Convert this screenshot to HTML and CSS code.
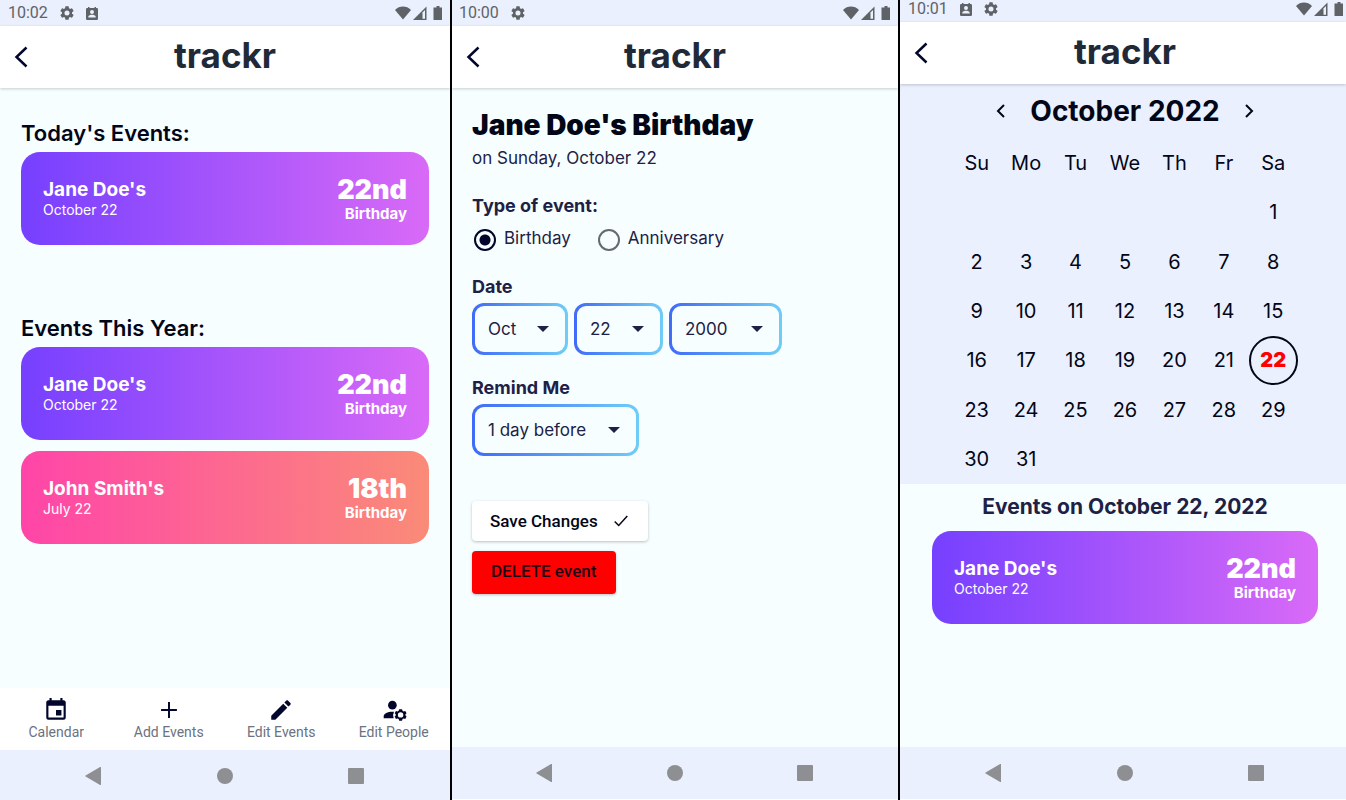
FILE: index.html
```html
<!DOCTYPE html>
<html lang="en">
<head>
<meta charset="utf-8">
<title>trackr</title>
<link rel="stylesheet" href="styles.css">
</head>
<body>
<svg class="sprite" aria-hidden="true">
  <symbol id="gear" viewBox="2 2 20 20"><path d="M19.14 12.94c.04-.3.06-.61.06-.94 0-.32-.02-.64-.07-.94l2.03-1.58a.49.49 0 0 0 .12-.61l-1.92-3.32a.49.49 0 0 0-.59-.22l-2.39.96c-.5-.38-1.03-.7-1.62-.94l-.36-2.54a.48.48 0 0 0-.48-.41h-3.84c-.24 0-.43.17-.47.41l-.36 2.54c-.59.24-1.13.57-1.62.94l-2.39-.96a.48.48 0 0 0-.59.22L2.74 8.87c-.12.21-.08.47.12.61l2.03 1.58c-.05.3-.09.63-.09.94s.02.64.07.94l-2.03 1.58a.49.49 0 0 0-.12.61l1.92 3.32c.12.22.37.29.59.22l2.39-.96c.5.38 1.03.7 1.62.94l.36 2.54c.05.24.24.41.48.41h3.84c.24 0 .44-.17.47-.41l.36-2.54c.59-.24 1.13-.56 1.62-.94l2.39.96c.22.08.47 0 .59-.22l1.92-3.32a.49.49 0 0 0-.12-.61zM12 15.6a3.6 3.6 0 1 1 0-7.2 3.6 3.6 0 0 1 0 7.2z"/></symbol>
  <symbol id="badge" viewBox="0 0 12 13"><path fill-rule="evenodd" d="M2 0h1.500v1h5V0H10v1h.8A1.200 1.200 0 0 1 12 2.200v9.600a1.200 1.200 0 0 1-1.200 1.200H1.200A1.200 1.200 0 0 1 0 11.800V2.200A1.200 1.200 0 0 1 1.200 1H2zM6 3a2 2 0 1 0 0 4 2 2 0 0 0 0-4zM2.300 10.500h7.400v-.8C9.700 8.400 7.200 7.800 6 7.800s-3.700.6-3.700 1.900z"/></symbol>
  <symbol id="power" viewBox="0 0 48 15"><path d="M0 4C4.500-.6 11.500-.6 16 4L8 13.500z"/><path d="M18 14L31.500 .5V14z"/><path class="power-gap" d="M27.500 6.500l2.500-2.500v8.800h-2.500z"/><path d="M41.500 0h3v1.500H47V14h-8.500V1.500h3z"/></symbol>
  <symbol id="back" viewBox="0 0 14 22"><path d="M12.500 1.500L2.500 11l10 9.500"/></symbol>
  <symbol id="calendar" viewBox="0 0 24 24"><path d="M19 19H5V8h14M16 1v2H8V1H6v2H5c-1.110 0-2 .89-2 2v14a2 2 0 0 0 2 2h14a2 2 0 0 0 2-2V5c0-1.110-.9-2-2-2h-1V1m-1 11h-5v5h5z"/></symbol>
  <symbol id="plus" viewBox="0 0 24 24"><path d="M19.300 12.900h-6.400v6.400h-1.800v-6.400H4.700v-1.800h6.400V4.700h1.800v6.400h6.400z"/></symbol>
  <symbol id="pencil" viewBox="0 0 24 24"><path d="M20.710 7.040c.39-.39.39-1.040 0-1.410l-2.340-2.340c-.37-.39-1.020-.39-1.410 0l-1.840 1.830 3.750 3.750M3 17.250V21h3.750L17.810 9.930l-3.750-3.750z"/></symbol>
  <symbol id="people" viewBox="0 0 24 24"><circle cx="10.500" cy="7.500" r="4"/><path d="M10.500 13.500c-4.400 0-8 1.800-8 4v2h9.200a7 7 0 0 1 .3-5.900c-.5-.1-1-.1-1.500-.1z"/><path fill-rule="evenodd" d="M22.600 16l1-1-1.200-2.100-1.500.4-1-.6-.5-1.500h-2.600l-.5 1.500-1 .6-1.500-.4-1.200 2.100 1 1v1.100l-1 1 1.200 2.100 1.500-.4 1 .6.500 1.500h2.600l.5-1.500 1-.6 1.500.4 1.200-2.100-1-1zM18.100 14a2.500 2.500 0 1 1 0 5 2.500 2.500 0 0 1 0-5z"/></symbol>
  <symbol id="caret" viewBox="0 0 12 6"><path d="M0 0h12L6 6z"/></symbol>
  <symbol id="sys-back" viewBox="0 0 16 18"><path d="M16 .5v17a.5.5 0 0 1-.9.400L.6 9.600a.8.8 0 0 1 0-1.200L15.100.1a.5.5 0 0 1 .9.400z"/></symbol>
</svg>

<main class="screens">
  <section class="screen">
    <div class="status">
      <time>10:02</time>
      <svg class="i14"><use href="#gear"/></svg>
      <svg class="badge"><use href="#badge"/></svg>
      <svg class="power"><use href="#power"/></svg>
    </div>
    <header class="bar">
      <button class="back" aria-label="Back"><svg><use href="#back"/></svg></button>
      <h1>trackr</h1>
    </header>
    <div class="content home">
      <section>
        <h2>Today's Events:</h2>
        <article class="card violet">
          <div><h3>Jane Doe's</h3><p>October 22</p></div>
          <div class="count"><strong>22nd</strong><b>Birthday</b></div>
        </article>
      </section>
      <section>
        <h2>Events This Year:</h2>
        <article class="card violet">
          <div><h3>Jane Doe's</h3><p>October 22</p></div>
          <div class="count"><strong>22nd</strong><b>Birthday</b></div>
        </article>
        <article class="card pink">
          <div><h3>John Smith's</h3><p>July 22</p></div>
          <div class="count"><strong>18th</strong><b>Birthday</b></div>
        </article>
      </section>
    </div>
    <nav class="tabs">
      <a href="#"><svg><use href="#calendar"/></svg>Calendar</a>
      <a href="#"><svg><use href="#plus"/></svg>Add Events</a>
      <a href="#"><svg><use href="#pencil"/></svg>Edit Events</a>
      <a href="#"><svg><use href="#people"/></svg>Edit People</a>
    </nav>
    <div class="system">
      <button aria-label="System back"><svg><use href="#sys-back"/></svg></button>
      <button aria-label="Home"><span class="dot"></span></button>
      <button aria-label="Recent apps"><span class="square"></span></button>
    </div>
  </section>

  <section class="screen second">
    <div class="status">
      <time>10:00</time>
      <svg class="i14"><use href="#gear"/></svg>
      <svg class="power"><use href="#power"/></svg>
    </div>
    <header class="bar">
      <button class="back" aria-label="Back"><svg><use href="#back"/></svg></button>
      <h1>trackr</h1>
    </header>
    <form class="content edit">
      <h2>Jane Doe's Birthday</h2>
      <p>on Sunday, October 22</p>
      <fieldset>
        <legend>Type of event:</legend>
        <div class="radios">
          <label><input type="radio" name="type" checked><span>Birthday</span></label>
          <label><input type="radio" name="type"><span>Anniversary</span></label>
        </div>
      </fieldset>
      <fieldset>
        <legend>Date</legend>
        <div class="selects">
          <div class="select month"><select aria-label="Month"><option>Oct</option></select><svg><use href="#caret"/></svg></div>
          <div class="select day"><select aria-label="Day"><option>22</option></select><svg><use href="#caret"/></svg></div>
          <div class="select year"><select aria-label="Year"><option>2000</option></select><svg><use href="#caret"/></svg></div>
        </div>
      </fieldset>
      <div class="field">
        <label for="remind">Remind Me</label>
        <div class="select remind"><select id="remind"><option>1 day before</option></select><svg><use href="#caret"/></svg></div>
      </div>
      <div class="actions">
        <button type="button" class="save">Save Changes
          <svg viewBox="0 0 14 12"><path d="M.7 6.500l4 4L13.300 1"/></svg>
        </button>
        <button type="button" class="delete">DELETE event</button>
      </div>
    </form>
    <div class="system raised">
      <button aria-label="System back"><svg><use href="#sys-back"/></svg></button>
      <button aria-label="Home"><span class="dot"></span></button>
      <button aria-label="Recent apps"><span class="square"></span></button>
    </div>
  </section>

  <section class="screen third">
    <div class="status short">
      <time>10:01</time>
      <svg class="badge"><use href="#badge"/></svg>
      <svg class="i14"><use href="#gear"/></svg>
      <svg class="power"><use href="#power"/></svg>
    </div>
    <header class="bar">
      <button class="back" aria-label="Back"><svg><use href="#back"/></svg></button>
      <h1>trackr</h1>
    </header>
    <div class="content">
      <div class="calendar">
        <div class="month-row">
          <button aria-label="Previous month"><svg viewBox="0 0 10 14"><path d="M8 1L2 7l6 6"/></svg></button>
          <h2>October 2022</h2>
          <button aria-label="Next month"><svg viewBox="0 0 10 14"><path d="M2 1l6 6-6 6"/></svg></button>
        </div>
        <table>
          <tbody>
            <tr><th>Su</th><th>Mo</th><th>Tu</th><th>We</th><th>Th</th><th>Fr</th><th>Sa</th></tr>
            <tr><td></td><td></td><td></td><td></td><td></td><td></td><td><button>1</button></td></tr>
            <tr><td><button>2</button></td><td><button>3</button></td><td><button>4</button></td><td><button>5</button></td><td><button>6</button></td><td><button>7</button></td><td><button>8</button></td></tr>
            <tr><td><button>9</button></td><td><button>10</button></td><td><button>11</button></td><td><button>12</button></td><td><button>13</button></td><td><button>14</button></td><td><button>15</button></td></tr>
            <tr><td><button>16</button></td><td><button>17</button></td><td><button>18</button></td><td><button>19</button></td><td><button>20</button></td><td><button>21</button></td><td><button class="today">22</button></td></tr>
            <tr><td><button>23</button></td><td><button>24</button></td><td><button>25</button></td><td><button>26</button></td><td><button>27</button></td><td><button>28</button></td><td><button>29</button></td></tr>
            <tr><td><button>30</button></td><td><button>31</button></td><td></td><td></td><td></td><td></td><td></td></tr>
          </tbody>
        </table>
      </div>
      <section class="day-events">
        <h2>Events on October 22, 2022</h2>
        <article class="card violet">
          <div><h3>Jane Doe's</h3><p>October 22</p></div>
          <div class="count"><strong>22nd</strong><b>Birthday</b></div>
        </article>
      </section>
    </div>
    <div class="system raised">
      <button aria-label="System back"><svg><use href="#sys-back"/></svg></button>
      <button aria-label="Home"><span class="dot"></span></button>
      <button aria-label="Recent apps"><span class="square"></span></button>
    </div>
  </section>
</main>
</body>
</html>
```

FILE: styles.css
```css
* { box-sizing: border-box; }
body {
  margin: 0;
  background: #fff;
  color: #020617;
  font-family: Inter, "Liberation Sans", sans-serif;
}
h1, h2, h3, p, fieldset, legend { margin: 0; padding: 0; border: 0; }
button { margin: 0; padding: 0; border: 0; background: none; color: inherit; font: inherit; }
svg { display: block; fill: currentColor; }
.sprite { position: absolute; width: 0; height: 0; }

.screens {
  display: grid;
  grid-template-columns: 452fr 448fr 446fr;
  min-height: 100vh;
}
.screen {
  display: flex;
  flex-direction: column;
  min-width: 0;
  border-right: 2px solid #000;
}
.third { border-right: 0; }

.status {
  display: flex;
  align-items: center;
  gap: 12px;
  height: 26px;
  padding: 0 7px 0 8px;
  background: #eaf0fd;
  color: #5f6267;
  font: 16px/26px Roboto, sans-serif;
}
.second .status { padding-left: 7px; }
.status.short { height: 22px; line-height: 18px; padding: 0 2px 4px 8px; }
.i14 { width: 14px; height: 14px; }
.badge { width: 12px; height: 13px; }
.power { width: 48px; height: 15px; margin-left: auto; }
.power-gap { fill: #eaf0fd; }

.bar {
  display: grid;
  grid-template-columns: 40px 1fr 40px;
  align-items: center;
  height: 62px;
  background: #fff;
  box-shadow: 0 1px 3px rgba(0, 0, 0, .2);
  z-index: 1;
}
.third .bar { grid-template-columns: 40px 1fr 36px; }
.back { padding-left: 14px; color: #02062b; }
.back svg { width: 14px; height: 22px; fill: none; stroke: currentColor; stroke-width: 2.5; }
.bar h1 { padding-bottom: 4px; color: #1f2937; font-size: 35px; line-height: 40px; font-weight: 700; text-align: center; }

.content { flex: 1; background: #f6feff; }
.home { display: grid; gap: 70px; align-content: start; padding: 32px 21px; }
.home section { display: grid; gap: 11px; }
.home h2 { margin-bottom: -5px; font-size: 22px; line-height: 26px; font-weight: 600; }

.card {
  display: flex;
  align-items: center;
  justify-content: space-between;
  height: 93px;
  padding: 2px 22px 0;
  border-radius: 19px;
  color: #fff;
}
.violet { background: linear-gradient(90deg, #7640ff, #d96af7); }
.pink { background: linear-gradient(90deg, #ff45a8, #fa8b78); }
.card h3 { font-size: 19px; line-height: 20px; font-weight: 700; }
.card p { font-size: 14px; line-height: 20px; }
.count { display: grid; justify-items: end; }
.count strong { font-size: 27px; line-height: 28px; font-weight: 900; }
.count b { font-size: 15px; line-height: 20px; font-weight: 700; }

.tabs {
  display: grid;
  grid-template-columns: repeat(4, 1fr);
  height: 62px;
  padding-top: 9px;
  background: #fff;
}
.tabs a {
  display: flex;
  flex-direction: column;
  align-items: center;
  color: #6b7280;
  font: 14px/18px Roboto, sans-serif;
  text-decoration: none;
}
.tabs svg { width: 26px; height: 26px; color: #02062b; }

.system {
  display: flex;
  align-items: center;
  justify-content: space-between;
  height: 50px;
  padding: 2px 86px 0 85px;
  background: #eaf0fd;
  color: #8e8f93;
}
.system.raised { height: 53px; padding-top: 0; border-bottom: 1px solid #fff; }
.second .system { padding-left: 84px; padding-right: 85px; }
.third .system { padding-right: 82px; }
.system svg { width: 16px; height: 18px; }
.dot, .square { display: block; width: 16px; height: 16px; background: currentColor; border-radius: 50%; }
.square { border-radius: 1px; }

.edit { padding: 20px; color: #1e2145; font-size: 17px; line-height: 24px; }
.edit h2 { color: #020617; font-size: 28px; line-height: 34px; font-weight: 900; }
.edit p { margin: 4px 0 24px; }
.edit legend, .field > label { display: block; font-size: 18px; font-weight: 700; line-height: 24px; }
.radios { display: flex; gap: 27px; padding: 10px 2px 23px; }
.radios label { display: flex; align-items: center; gap: 8px; }
.radios span { padding-bottom: 4px; line-height: 20px; }
.radios input {
  appearance: none;
  width: 22px;
  height: 22px;
  margin: 0;
  border: 2px solid #666a70;
  border-radius: 50%;
}
.radios input:checked { border-color: #02062b; background: radial-gradient(#02062b 5px, transparent 6px); }
.selects { display: flex; gap: 6px; padding: 4px 0 21px; }
.select { display: grid; grid-template-columns: 1fr 31px; align-items: center; height: 52px; }
.select select {
  grid-area: 1 / 1 / 2 / 3;
  appearance: none;
  width: 100%;
  height: 100%;
  padding: 0 13px;
  border: 3px solid transparent;
  border-radius: 12px;
  outline: 0;
  background: linear-gradient(#f6feff, #f6feff) padding-box, linear-gradient(90deg, #416bf7, #6fcdf7) border-box;
  color: inherit;
  font: inherit;
}
.select svg { grid-area: 1 / 2; width: 12px; height: 6px; pointer-events: none; }
.month { width: 96px; }
.day { width: 89px; }
.year { width: 113px; }
.remind { width: 167px; margin-top: 4px; }

.actions { display: grid; justify-items: start; gap: 10px; padding-top: 45px; }
.actions button {
  padding: 0 18px;
  border-radius: 4px;
  box-shadow: 0 1px 3px rgba(0, 0, 0, .25);
  color: #020617;
  font: 500 17px/40px Roboto, sans-serif;
}
.actions .save { display: flex; align-items: center; gap: 16px; padding-right: 20px; background: #fff; }
.save svg { width: 14px; height: 12px; fill: none; stroke: currentColor; stroke-width: 1.5; }
.actions .delete { padding: 0 20px 3px 19px; background: #f00; color: #1c0414; }

.calendar { padding: 10px 48px 0 52px; background: #eaf0fd; }
.month-row { display: flex; align-items: center; justify-content: space-between; padding: 0 44px; }
.month-row h2 { font-size: 28px; line-height: 34px; font-weight: 700; }
.month-row svg { width: 10px; height: 14px; fill: none; stroke: currentColor; stroke-width: 2; }
table { width: 100%; height: 346px; margin-top: 10px; border-collapse: collapse; table-layout: fixed; font-size: 20px; text-align: center; }
th, td { height: 49px; padding: 0; font-weight: 400; vertical-align: middle; }
td button { display: block; width: 49px; height: 49px; margin: 0 auto; border-radius: 50%; }
td .today { border: 2px solid #020617; color: #f00; font-weight: 900; }
.day-events { padding: 10px 28px 20px 32px; }
.day-events h2 { margin-bottom: 11px; color: #1e2145; font-size: 21px; line-height: 26px; font-weight: 700; text-align: center; }
```
